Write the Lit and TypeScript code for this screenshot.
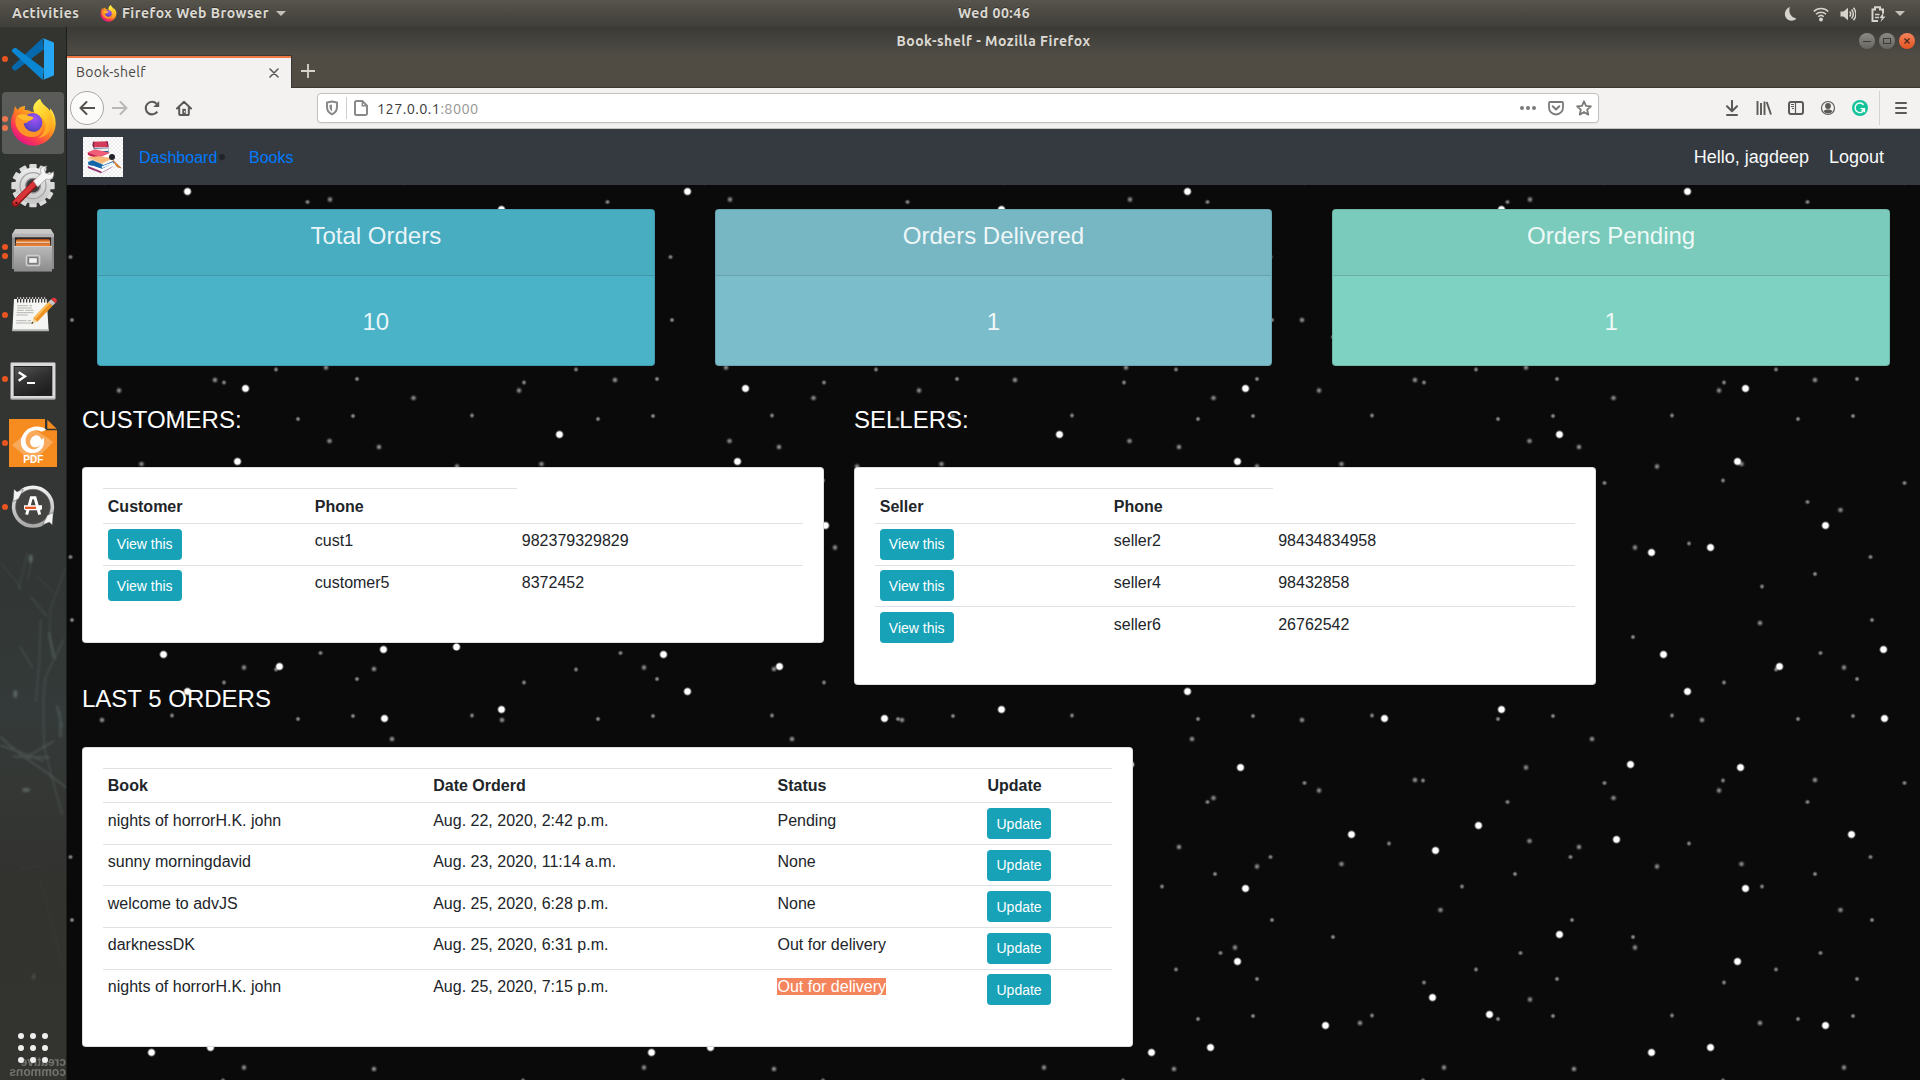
import { LitElement, html, css, unsafeCSS, type TemplateResult } from "lit";
import { customElement } from "lit/decorators.js";
import { classMap } from "lit/directives/class-map.js";

/* ---------- starfield: three layers that repeat at different periods ---------- */
type Pt = [number, number];
const BRIGHT: Pt[] = [[796,283],[1144,319],[1456,268],[868,394],[310,448],[697,613],[1027,622],[1459,475],[241,796],[655,838],[112,871],[1360,823],[1042,985],[484,1123],[1018,1204],[103,1312],[274,1363],[760,1477],[937,1462],[1282,1396],[175,260]];
const MEDIUM: Pt[] = [[912,480],[581,536],[384,622],[646,713],[962,691],[1251,660],[394,843],[543,860],[777,919],[1030,912],[1327,1049],[711,1162],[396,1318],[1085,1388],[528,1527],[1337,1522]];
const SMALL: Pt[] = [[1251,42],[1092,79],[1422,180],[704,231],[1267,279],[1134,328],[1377,357],[978,367],[821,466],[1199,476],[1365,468],[619,668],[974,661],[1228,726],[873,850],[1417,891]];
const ORIGIN: Pt = [67, 185];

function layer(points: Pt[], period: number, gradient: string): string[] {
  return points.map(([px, py]) => {
    const x = 1398 + (px + 0.5) / 3 - ORIGIN[0];
    const y = 560 + (py + 0.5) / 3 - ORIGIN[1];
    const left = Math.round((((x - period / 2) % period) + period) % period * 2) / 2;
    const top = Math.round((((y - period / 2) % period) + period) % period * 2) / 2;
    return `${gradient} ${left}px ${top}px / ${period}px ${period}px`;
  });
}
const starfield = [
  ...layer(BRIGHT, 500, "radial-gradient(circle at center, #fff 0, #fff 3px, rgba(255,255,255,0) 4px)"),
  ...layer(MEDIUM, 400, "radial-gradient(circle at center, rgba(255,255,255,.6) 0, rgba(255,255,255,.46) 1px, rgba(255,255,255,.16) 2.5px, rgba(255,255,255,0) 3.8px)"),
  ...layer(SMALL, 300, "radial-gradient(circle at center, rgba(255,255,255,.62) 0, rgba(255,255,255,.44) 1px, rgba(255,255,255,0) 2.8px)"),
].join(",");

/* ---------- icons ---------- */
const firefox = (id: string, cls: string, box: string) => html`
  <svg class=${cls} viewBox=${box}>
    <defs>
      <linearGradient id="${id}a" x1="0.85" y1="0.1" x2="0.25" y2="0.95">
        <stop offset="0" stop-color="#fff44f"/><stop offset=".3" stop-color="#ffb61f"/><stop offset=".55" stop-color="#ff7a25"/><stop offset=".78" stop-color="#fb3a50"/><stop offset="1" stop-color="#e31587"/>
      </linearGradient>
      <radialGradient id="${id}b" cx=".6" cy=".3" r=".75">
        <stop offset="0" stop-color="#a452f5"/><stop offset=".6" stop-color="#6b48d8"/><stop offset="1" stop-color="#4a3cb0"/>
      </radialGradient>
      <linearGradient id="${id}c" x1="0.2" y1="0" x2="0.8" y2="1">
        <stop offset="0" stop-color="#fff04c"/><stop offset=".5" stop-color="#ffcb2a"/><stop offset="1" stop-color="#ff9a23"/>
      </linearGradient>
    </defs>
    <path d="M120 24c4 12 12 18 22 27 3 3 6 6 8 10l1-9c10 12 16 28 16 45 0 37-30 67-67 67S33 134 33 97c0-12 2-22 7-30l5-22c3 5 5 8 7 12l8-8 15-5-1 13c9-1 14 2 20 5h11c-6-13-1-28 15-38z" fill="url(#${id}a)"/>
    <path d="M120 24c4 12 12 18 22 27 14 14 18 30 14 50-4 22-20 36-42 40 20-12 28-32 20-52-7-13-27-18-33-30-4-12 3-27 19-35z" fill="url(#${id}c)"/>
    <circle cx="98" cy="95" r="29" fill="url(#${id}b)"/>
    <path d="M50 75c10-5 22-5 33 0 6 3 12 2 17 4 0 6-6 9-15 12-3 6-10 7-14 5 1 13 11 24 26 26 14 2 24-6 29-15 2 18-12 31-30 31-26 0-47-19-50-43 0-8 1-14 4-20z" fill="#ff9526"/>
    <path d="M50 75c10-6 22-7 31-2 6 3 13 4 19 6-1 5-7 8-15 10-12 1-20-3-35-14z" fill="#ffbd2e"/>
  </svg>`;

const vscode = html`<svg class="glyph" viewBox="0 0 201 192">
  <path d="M128 33 L132 67 L48 130 Q44 132 40 128 L36 124 Q34 120 38 117 Z" fill="#0769ad"/>
  <path d="M128 159 L132 125 L48 63 Q44 61 40 65 L36 68 Q34 73 38 76 Z" fill="#0a86d2"/>
  <path d="M128 33 L160 46 Q162 47 162 50 V142 Q162 145 160 146 L128 159 Q132 157 132 152 V40 Q132 35 128 33Z" fill="#27a7f3"/>
</svg>`;

const teeth = Array.from({ length: 12 }, (_, i) => i * 30);
const settings = html`<svg class="glyph" viewBox="0 0 201 192">
  <defs><linearGradient id="gr" x1="0" y1="0" x2="0" y2="1"><stop offset="0" stop-color="#ededed"/><stop offset="1" stop-color="#c4c4c4"/></linearGradient></defs>
  ${teeth.map((a) => html`<svg x="0" y="0" width="201" height="192" viewBox="0 0 201 192"><rect x="88" y="27" width="22" height="26" rx="3" fill="#dadada" transform="rotate(${a} 99 92)"/></svg>`)}
  <circle cx="99" cy="92" r="54" fill="url(#gr)"/>
  <circle cx="99" cy="92" r="39" fill="none" stroke="#a5a5a5" stroke-width="4"/>
  <circle cx="99" cy="92" r="22" fill="#3b3b39" stroke="#8e8e8e" stroke-width="4"/>
  <path d="M46 145 L108 82" stroke="#8f1616" stroke-width="21" stroke-linecap="round"/>
  <path d="M47 142 L107 82" stroke="#d8353a" stroke-width="15" stroke-linecap="round"/>
  <path d="M100 78 L124 55 C117 42 126 32 141 34 L133 43 137 55 149 58 160 50 C165 64 154 78 138 72 L113 96Z" fill="#f4f4f4" stroke="#999" stroke-width="2"/>
  <circle cx="49" cy="144" r="3.500" fill="#4a0a0a"/>
</svg>`;

const files = html`<svg class="glyph" viewBox="0 0 201 192">
  <defs><linearGradient id="fl" x1="0" y1="0" x2="0" y2="1"><stop offset="0" stop-color="#b9b9b9"/><stop offset="1" stop-color="#8b8b8b"/></linearGradient></defs>
  <path d="M46 30h106l10 17v103H36V47z" fill="#8c8c8c"/><path d="M46 30h106l10 17H36z" fill="#c9c9c9"/>
  <rect x="36" y="44" width="126" height="11" fill="#b3b3b3"/>
  <rect x="45" y="55" width="108" height="27" fill="#2d2928"/>
  <rect x="50" y="60" width="98" height="5" fill="#b24c12"/><rect x="48" y="64" width="102" height="7" fill="#f08a3c"/><rect x="48" y="70" width="102" height="3" fill="#fff3e4"/><rect x="47" y="73" width="104" height="9" fill="#e77a2c"/>
  <path d="M42 82h114v76H42z" fill="url(#fl)"/><path d="M42 82h114v2H42z" fill="#dedede"/><path d="M42 156h114v3H42z" fill="#666"/>
  <rect x="79" y="109" width="40" height="31" rx="6" fill="none" stroke="#cfcfcf" stroke-width="4"/>
  <rect x="86" y="116" width="26" height="17" fill="#f1f1f1" stroke="#707070" stroke-width="3"/>
</svg>`;

const notes = html`<svg class="glyph" viewBox="0 0 201 192">
  <path d="M42 48h98l6 95H37z" fill="#f5f5f3"/><path d="M37 139h109v6H37z" fill="#b5b5b1"/>
  <path d="M53 57V42M62 57V42M71 57V42M80 57V42M89 57V42M98 57V42M107 57V42M116 57V42M125 57V42M134 57V42" stroke="#3b3b3b" stroke-width="4" stroke-linecap="round"/>
  <path d="M53 48V42M62 48V42M71 48V42M80 48V42M89 48V42M98 48V42M107 48V42M116 48V42M125 48V42M134 48V42" stroke="#cfcfcf" stroke-width="3"/>
  <path d="M52 68h32M88 68h8M52 75h44M51 82h20M76 82h25M50 89h50M49 96h34M49 113h30M83 113h10M48 120h45" stroke="#a8a8a4" stroke-width="2.5"/>
  <path d="M94 123l6-18 12 11z" fill="#f3d9a0"/><path d="M94 123l2-7 5 4z" fill="#222"/>
  <path d="M100 105 L145 57 L158 68 L112 116Z" fill="#ef9422"/><path d="M103 102 L147 56 L151 60 L106 108Z" fill="#ffc15e"/>
  <path d="M145 57l8-8 13 11-8 8z" fill="#c9c9c9"/><path d="M153 49c5-6 11-6 15-2s4 8-2 13z" fill="#e2383c"/>
</svg>`;

const terminal = html`<svg class="glyph" viewBox="0 0 201 192">
  <defs><linearGradient id="tm" x1="0" y1="0" x2=".6" y2="1"><stop offset="0" stop-color="#555"/><stop offset=".5" stop-color="#333"/><stop offset="1" stop-color="#1f1f1f"/></linearGradient></defs>
  <rect x="31" y="46" width="136" height="112" rx="4" fill="#a9a9a9"/><rect x="33" y="48" width="132" height="106" rx="3" fill="#dadada"/>
  <rect x="41" y="57" width="116" height="90" fill="#222"/><rect x="44" y="60" width="110" height="84" fill="url(#tm)"/>
  <path d="M56 76L75 88L56 101" fill="none" stroke="#fff" stroke-width="7"/><rect x="81" y="105" width="24" height="6" fill="#fff"/>
</svg>`;

const pdf = html`<svg class="glyph" viewBox="0 0 201 192">
  <path d="M27 24h108v34h36v110H27z" fill="#f68b1f"/><path d="M142 26l28 27h-28z" fill="#f68b1f"/>
  <path d="M98 50l62 43-62 62-62-53z" fill="#f9a95a"/>
  <path d="M139 56C122 41 92 44 77 60C52 86 60 124 95 126C122 127 137 106 131 80L125 86C118 69 104 70 95 80C86 92 91 107 104 109C112 110 118 106 121 100C116 117 96 120 84 108C71 94 76 70 94 61C106 55 118 58 125 62Z" fill="#fff"/>
  <text x="100" y="156" text-anchor="middle" class="pdf-label">PDF</text>
</svg>`;

const updater = html`<svg class="glyph" viewBox="0 0 201 192">
  <defs><linearGradient id="ug" x1="0" y1="0" x2="0" y2="1"><stop offset="0" stop-color="#f0f0f0"/><stop offset="1" stop-color="#a9a9a9"/></linearGradient></defs>
  <circle cx="99" cy="95" r="58" fill="#444442" stroke="url(#ug)" stroke-width="11"/><circle cx="99" cy="95" r="52" fill="none" stroke="#6d6d6b" stroke-width="1.5"/>
  <path d="M39 80l3-38 9 8 19-7-14 28z" fill="#f2f2f2" stroke="#444" stroke-width="1.5"/><path d="M160 112l-3 38-9-8-20 7 14-28z" fill="#f2f2f2" stroke="#444" stroke-width="1.5"/>
  <path d="M80 119L94 68h11l14 51" fill="none" stroke="#fff" stroke-width="9"/>
  <path d="M72 91h54v11l-4 4H76l-4-4z" fill="#fff"/><path d="M75 95h33v7H75z" fill="#e95420"/>
</svg>`;

const wallpaper = html`<svg class="wallpaper" viewBox="0 0 201 1620" preserveAspectRatio="none">
  <g fill="none" stroke="#9fc0bb" stroke-linecap="round">
    <path d="M0 68L50 125L62 150M58 145L82 35M84 120L96 45M110 108L160 156M196 85L152 205L147 290L168 360" stroke-width="3" opacity=".16"/>
    <path d="M190 300L136 412L130 480L132 620L158 722L186 822" stroke-width="4" opacity=".18"/>
    <path d="M122 240L118 360L108 484M92 170L140 228M60 320L98 384" stroke-width="4" opacity=".17"/>
    <path d="M0 590L60 642L130 690L200 744M0 616L60 636L130 664M40 650L148 652M90 645L160 604" stroke-width="5" opacity=".2"/>
    <path d="M148 280L160 350M172 500L186 560M180 520L182 590" stroke-width="8" opacity=".16"/>
    <path d="M60 985L126 978M120 1020L190 1280" stroke-width="3" opacity=".07"/>
  </g>
  <g fill="#b5d0cb" opacity=".3"><ellipse cx="92" cy="56" rx="6" ry="12"/><ellipse cx="46" cy="462" rx="6" ry="12"/><ellipse cx="78" cy="750" rx="12" ry="6"/><ellipse cx="101" cy="1310" rx="5" ry="9" opacity=".6"/></g>
</svg>`;

interface DockApp { glyph: TemplateResult; windows: number; active?: boolean; }
const DOCK: DockApp[] = [
  { glyph: vscode, windows: 1 },
  { glyph: firefox("fd", "glyph", "0 0 201 192"), windows: 2, active: true },
  { glyph: settings, windows: 0 },
  { glyph: files, windows: 2 },
  { glyph: notes, windows: 1 },
  { glyph: terminal, windows: 1 },
  { glyph: pdf, windows: 1 },
  { glyph: updater, windows: 1 },
];

const I = {
  back: html`<svg class="i16" viewBox="0 0 16 16"><path d="M15.5 8H1.5M7.5 2L1.5 8l6 6" fill="none" stroke="#55534f" stroke-width="2" stroke-linecap="round" stroke-linejoin="round"/></svg>`,
  forward: html`<svg class="i16" viewBox="0 0 16 16"><path d="M.5 8h14M8.500 2l6 6-6 6" fill="none" stroke="#b9b8b6" stroke-width="2" stroke-linecap="round" stroke-linejoin="round"/></svg>`,
  reload: html`<svg class="i16" viewBox="0 0 16 16"><path d="M13.300 11.600A6.300 6.300 0 1 1 12.600 3.700" fill="none" stroke="#5c5a57" stroke-width="2.100"/><path d="M15.200 1v6H9.200z" fill="#5c5a57"/></svg>`,
  home: html`<svg class="i16" viewBox="0 0 16 16"><path d="M1 8.500L8 1.700l7 6.800M3.200 7.500v6.600a.9.900 0 0 0 .9.900h7.800a.9.900 0 0 0 .9-.9V7.500" fill="none" stroke="#5c5a57" stroke-width="2" stroke-linecap="round" stroke-linejoin="round"/><path d="M6.300 15V8.800h3.500V15" fill="#5c5a57"/><rect x="8" y="11" width="1" height="1.500" fill="#f3f2f1"/></svg>`,
  shield: html`<svg class="i16" viewBox="0 0 16 16"><path d="M8 1.500l5 1v4.300c0 3.700-2 6.300-5 7.500-3-1.200-5-3.800-5-7.500V2.500z" fill="none" stroke="#8a8987" stroke-width="2" stroke-linejoin="round"/><path d="M8 4.500v7C6.300 10.300 5.500 8.700 5.500 6.500V5z" fill="#8a8987"/></svg>`,
  page: html`<svg class="i16" viewBox="0 0 16 16"><path d="M3.500 1h5.800l4.700 4.700v7.800A1.500 1.500 0 0 1 12.500 15h-9A1.500 1.500 0 0 1 2 13.500v-11A1.500 1.500 0 0 1 3.500 1z" fill="none" stroke="#8a8987" stroke-width="2"/><path d="M9.300 1v4.700H14" fill="none" stroke="#8a8987" stroke-width="1.400"/></svg>`,
  more: html`<svg class="i16" viewBox="0 0 16 16"><circle cx="2" cy="8" r="2" fill="#7b7a78"/><circle cx="8" cy="8" r="2" fill="#7b7a78"/><circle cx="14" cy="8" r="2" fill="#7b7a78"/></svg>`,
  pocket: html`<svg class="i16" viewBox="0 0 16 16"><path d="M2 2h12a1 1 0 0 1 1 1v4.500a7 7 0 0 1-14 0V3a1 1 0 0 1 1-1z" fill="none" stroke="#7b7a78" stroke-width="1.800"/><path d="M4.700 6.300L8 9.500l3.300-3.200" fill="none" stroke="#7b7a78" stroke-width="2" stroke-linecap="round" stroke-linejoin="round"/></svg>`,
  star: html`<svg class="i16" viewBox="0 0 16 16"><path d="M8 1.300l2 4.500 4.900.5-3.700 3.300 1.100 5L8 12.100l-4.300 2.500 1.100-5L1.100 6.300 6 5.800z" fill="none" stroke="#7b7a78" stroke-width="1.800" stroke-linejoin="round"/></svg>`,
  download: html`<svg class="i16" viewBox="0 0 16 16"><path d="M8 .8v9.700M3 6.200l5 5 5-5" fill="none" stroke="#5c5a57" stroke-width="2" stroke-linecap="round" stroke-linejoin="round"/><path d="M3 15h10" stroke="#5c5a57" stroke-width="2" stroke-linecap="round"/></svg>`,
  library: html`<svg class="i16" viewBox="0 0 16 16"><path d="M1.500 1v14M5 3v12M8.500 1.500V15M10.700 2l4.300 12.500" fill="none" stroke="#5c5a57" stroke-width="1.900"/></svg>`,
  sidebar: html`<svg class="i16" viewBox="0 0 16 16"><rect x="1" y="2" width="14" height="12" rx="2" fill="none" stroke="#5c5a57" stroke-width="2"/><path d="M7.500 2v12" stroke="#5c5a57" stroke-width="1.200"/><path d="M3 4.500h3M3 6.500h3M4 8.500h2" stroke="#5c5a57"/></svg>`,
  account: html`<svg class="i16" viewBox="0 0 16 16"><circle cx="8" cy="8" r="6.500" fill="none" stroke="#5c5a57" stroke-width="1.200"/><circle cx="8" cy="6" r="2.900" fill="#5c5a57"/><path d="M3.700 11.700C4.300 9.900 5.500 9.500 8 9.500s3.700.4 4.300 2.200A5.600 5.600 0 0 1 8 13.500a5.600 5.600 0 0 1-4.300-1.800z" fill="#5c5a57"/></svg>`,
  grammarly: html`<svg class="i16" viewBox="0 0 16 16"><circle cx="8" cy="8" r="8" fill="#15c39a"/><path d="M11.600 4.700A4.800 4.800 0 1 0 12.200 10" fill="none" stroke="#fff" stroke-width="1.400"/><path d="M8.500 8.600h4v3.700M12.300 8.700l-2.500 2.200" fill="none" stroke="#fff" stroke-width="1.300"/></svg>`,
  menu: html`<svg class="i16" viewBox="0 0 16 16"><path d="M3 3h10M3 8h10M3 13h10" stroke="#5c5a57" stroke-width="2" stroke-linecap="round"/></svg>`,
  moon: html`<svg class="i16" viewBox="0 0 16 16"><path d="M7 .9C5.300 5 6.800 10.900 13.500 12.500C10.500 15.800 5.400 15.400 3 11.800C.5 7.800 2.500 2.500 7 .9z" fill="#d6d3cc"/></svg>`,
  wifi: html`<svg class="i16" viewBox="0 0 16 16"><path d="M.8 5.600C4.700 1.600 11.300 1.600 15.200 5.600M3 8.300c2.800-2.800 7.200-2.800 10 0M5.200 10.700c1.600-1.500 4-1.500 5.600 0" fill="none" stroke="#d6d3cc" stroke-width="1.500"/><circle cx="8" cy="13.400" r="2" fill="#d6d3cc"/></svg>`,
  volume: html`<svg class="i16" viewBox="0 0 16 16"><path d="M.5 5.500h3L8 1.800v12.400L3.500 10.500h-3z" fill="#d6d3cc"/><path d="M9.700 5.500c1.200 1.500 1.200 3.500 0 5M11.600 3.500c2.100 2.700 2.100 6.300 0 9M13.500 1.800c3 3.700 3 8.700 0 12.400" fill="none" stroke="#d6d3cc" stroke-width="1.500"/></svg>`,
  battery: html`<svg class="i16" viewBox="0 0 16 16"><path d="M8 15H2.500V3.500H5V1.200h5v2.300h3v4" fill="none" stroke="#d6d3cc" stroke-width="2"/><path d="M5 8.500h4.500M5 11.500h4" stroke="#d6d3cc" stroke-width="1.500"/><path d="M13.500 6.500L9.500 12h2.300l-1.300 4L15.500 10.500h-2.500z" fill="#d6d3cc"/></svg>`,
  caret: html`<svg class="caret" viewBox="0 0 10 5"><path d="M0 0h10L5 5z" fill="#c4c1ba"/></svg>`,
};

const books = html`<svg class="brand" viewBox="0 0 120 120">
  <defs><pattern id="ck" width="12" height="12" patternUnits="userSpaceOnUse"><rect width="12" height="12" fill="#fff"/><path d="M0 0h6v6H0zM6 6h6v6H6z" fill="#ededed"/></pattern></defs>
  <rect width="120" height="120" fill="url(#ck)"/>
  <path d="M30 14l43-1 3 18H32z" fill="#d33b5a"/><path d="M30 14q-4 9 1 18h4q-4-9 0-18zM70 13l4 18h3q-1-12-3-18z" fill="#8a1f4b"/>
  <path d="M32 33l44-1 1 17H34z" fill="#1d5f93"/><path d="M33 35l43-1v8H34z" fill="#f4f1ea"/>
  <path d="M14 46l22-9 46 11-30 14z" fill="#ef5d78"/><path d="M14 46l38 15v8L15 54z" fill="#c22049"/><path d="M52 61l30-13v7L52 68z" fill="#fff"/>
  <path d="M14 60l34-2 42 6-34 16z" fill="#f7b878"/><path d="M14 60l41 19v7L15 68z" fill="#f3d2b4"/><path d="M56 80l34-14v7L56 87z" fill="#fff5ea"/>
  <path d="M15 75l14-5 33 14 30-13v8L56 96 16 83z" fill="#1667a9"/><path d="M56 88l34-13v6L57 94z" fill="#e9f3fb"/>
  <path d="M17 87l13-1 28 10 32-15v7L58 106 17 96z" fill="#fff"/><path d="M15 88l40 16v4L16 93zM58 106l31-17" fill="#8a2261" stroke="#8a2261" stroke-width="1.500"/>
  <path d="M90 70l24 23-12-4z" fill="#e88b26" stroke="#b5611b" stroke-width="2"/>
</svg>`;

/* ---------- data ---------- */
const STATS = [
  { title: "Total Orders", value: "10", tone: "teal" },
  { title: "Orders Delivered", value: "1", tone: "steel" },
  { title: "Orders Pending", value: "1", tone: "mint" },
];
const CUSTOMERS = [["cust1", "982379329829"], ["customer5", "8372452"]];
const SELLERS = [["seller2", "98434834958"], ["seller4", "98432858"], ["seller6", "26762542"]];
const ORDERS = [
  { book: "nights of horrorH.K. john", date: "Aug. 22, 2020, 2:42 p.m.", status: "Pending" },
  { book: "sunny morningdavid", date: "Aug. 23, 2020, 11:14 a.m.", status: "None" },
  { book: "welcome to advJS", date: "Aug. 25, 2020, 6:28 p.m.", status: "None" },
  { book: "darknessDK", date: "Aug. 25, 2020, 6:31 p.m.", status: "Out for delivery" },
  { book: "nights of horrorH.K. john", date: "Aug. 25, 2020, 7:15 p.m.", status: "Out for delivery", selected: true },
];

@customElement("app-root")
export class AppRoot extends LitElement {
  static styles = css`
    :host { display: block; width: 1920px; height: 1080px; overflow: hidden; background: #0a0a0a; font-family: "Liberation Sans", Arial, sans-serif; font-size: 16px; line-height: 24px; color: #212529; }
    * { box-sizing: border-box; }
    svg { display: block; flex: none; }
    .i16 { width: 16px; height: 16px; }
    .ui { font-family: "Ubuntu", "Open Sans", "Noto Sans", sans-serif; white-space: nowrap; }

    .panel { display: flex; align-items: center; height: 27px; padding: 0 15px 0 12px; background: linear-gradient(#57544c, #3f3e39); color: #dcd9d2; font-size: 14px; font-weight: 700; line-height: 27px; letter-spacing: .5px; text-shadow: 0 -1px 0 rgba(0,0,0,.35); }
    .start { display: flex; align-items: center; width: 946px; }
    .activities { width: 88px; }
    .panel-ff { width: 17px; height: 17px; margin-right: 5px; }
    .app-name { width: 154px; }
    .caret { width: 10px; height: 5px; }
    .tray { display: flex; align-items: center; justify-content: flex-end; flex: 1; gap: 14px; }
    .tray .i16:nth-child(3) { margin-left: -3px; }
    .tray .caret { margin-left: -5px; }

    .body { display: flex; height: 1053px; }
    .dock { position: relative; display: flex; flex-direction: column; width: 67px; overflow: hidden; border-right: 1px solid #1d1f1d;
      background: linear-gradient(#33342f 0, #2f3330 150px, #333533 420px, #323735 560px, #343a39 690px, #343734 760px, #32322f 860px, #33332f 1053px); }
    .wallpaper { position: absolute; left: 0; top: 513px; width: 67px; height: 540px; filter: blur(.8px); }
    .app { display: flex; align-items: center; height: 64px; padding: 1px 2px; }
    .app-tile { display: flex; width: 62px; height: 62px; border-radius: 4px; }
    .app-tile.active { background: rgba(255,255,255,.2); }
    .app-tile .glyph { width: 67px; height: 64px; margin: -1px 0 0 -2px; }
    .pips { display: flex; flex-direction: column; justify-content: center; gap: 3px; width: 6px; height: 62px; margin-right: -6px; }
    .pip { width: 6px; height: 6px; border-radius: 50%; background: #e95420; }
    .pdf-label { font: 700 30px "Liberation Sans", Arial, sans-serif; fill: #fff; }
    .apps-grid { position: relative; z-index: 1; display: grid; grid-template-columns: repeat(3, 6px); gap: 6px; margin: auto 0 0 18px; }
    .apps-grid i { width: 6px; height: 6px; border-radius: 50%; background: #efefef; }
    .watermark { display: flex; flex-direction: column; height: 24px; margin-top: -7px; padding-top: 1px; font: 700 12px/10px "Liberation Sans", Arial, sans-serif; color: rgba(190,190,186,.45); transform: scaleX(-1); }

    .window { display: flex; flex-direction: column; flex: 1; min-width: 0; }
    .titlebar { display: flex; align-items: center; height: 28px; padding-right: 5px; background: linear-gradient(#3b3a36, #4f4c45); color: #dcd9d2; font-size: 14px; font-weight: 700; letter-spacing: .5px; }
    .title { flex: 1; padding-left: 61px; text-align: center; }
    .controls { display: flex; gap: 4px; }
    .ctl { width: 16px; height: 16px; border-radius: 50%; background: linear-gradient(#8c8a84, #666560); }
    .ctl.close { background: linear-gradient(#f4845c, #e35321); }
    .tabs { display: flex; align-items: stretch; height: 33px; background: #504c44; border-bottom: 1px solid #3a3833; }
    .tab { display: flex; align-items: center; justify-content: space-between; width: 225px; height: 33px; padding: 2px 12px 0 9px; border-top: 1px solid #3a3833; border-right: 1px solid #3a3833; background: linear-gradient(#f07746 2px, #f3f2f1 2px); color: #4a4845; font-size: 14px; letter-spacing: .3px; }
    .tab-label { margin-top: -3px; }
    .tab-x { width: 10px; height: 10px; }
    .plus { width: 14px; height: 14px; margin: 9px 0 0 9px; }
    .toolbar { display: flex; align-items: center; height: 41px; padding: 0 11px 0 3px; background: #f3f2f1; border-bottom: 1px solid #c4c3c1; }
    .back { display: flex; align-items: center; justify-content: center; width: 34px; height: 34px; border: 1px solid #a9a8a6; border-radius: 50%; background: #fbfbfa; }
    .nav-icons { display: flex; gap: 16px; width: 213px; padding-left: 8px; }
    .url { display: flex; align-items: center; width: 1282px; height: 30px; padding: 0 6px; border: 1px solid #c2c1bf; border-radius: 4px; background: #fff; box-shadow: 0 1px 2px rgba(0,0,0,.06); }
    .url-sep { width: 1px; height: 22px; margin: 0 6px; background: #cfcecc; }
    .addr { flex: 1; padding: 1px 0 0 8px; font-size: 14.5px; letter-spacing: .4px; color: #3b3a38; }
    .port { color: #969593; }
    .url-actions { display: flex; gap: 12px; }
    .tools { display: flex; align-items: center; gap: 16px; flex: 1; justify-content: flex-end; }
    .tool-sep { width: 1px; height: 34px; margin: 0 -3px 0 -5px; background: #d3d2d0; }

    .navbar { display: flex; align-items: center; height: 56px; padding: 0 36px 0 16px; background: #343a40; }
    .brand { width: 40px; height: 40px; margin-right: -14px; }
    .bullet { width: 6px; height: 6px; border-radius: 50%; background: #212529; }
    .item { display: flex; align-items: center; }
    .link { padding: 2px 0 0 24px; color: #007bff; text-decoration: none; }
    .item.first .link { width: 104px; }
    .hello { margin-left: auto; font-size: 18px; color: #f8f9fa; }
    .logout { margin-left: 20px; font-size: 18px; color: #f8f9fa; }

    .page { flex: 1; padding-top: 24px; background: ${unsafeCSS(starfield)}, #0a0a0a; }
    .stats { display: grid; grid-template-columns: repeat(3, 1fr); }
    .stat { margin: 0 30px; height: 157px; border: 1px solid rgba(0,0,0,.125); border-radius: 4px; color: rgba(255,255,255,.9); font-size: 24px; line-height: 28.8px; text-align: center; overflow: hidden; }
    .stat-head { height: 66px; padding-top: 12px; border-bottom: 1px solid rgba(0,0,0,.125); background: rgba(0,0,0,.03); }
    .stat-value { padding-top: 32px; }
    .teal { background-color: #4bb3c8; }
    .steel { background-color: #7bbdcb; }
    .mint { background-color: #7ed2c2; }

    .people { display: grid; grid-template-columns: 742px 742px; gap: 30px; align-items: start; padding: 39.6px 0 0 15px; }
    .orders { width: 1066px; padding-left: 15px; }
    .heading { margin: 0 0 33px; font-size: 24px; font-weight: 400; line-height: 28.8px; color: #fff; }
    .card { padding: 20px 20px 36px; border: 1px solid rgba(0,0,0,.125); border-radius: 4px; background: #fff; }
    .row { display: grid; }
    .cust .row { grid-template-columns: 207px 207px 286px; }
    .sell .row { grid-template-columns: 234px 164.4px 301.6px; }
    .ord .row { grid-template-columns: 325.4px 344.3px 210px 129.3px; }
    .cell { height: 41.6px; padding: 5.35px 4.8px 0; border-top: 1px solid #dee2e6; white-space: nowrap; }
    .cell.action { padding-top: 4.8px; }
    .head .cell { height: 34.6px; font-weight: 700; }
    .btn { display: inline-block; height: 31px; padding: 4.55px 8px 3.45px; border: 1px solid #17a2b8; border-radius: 3.2px; background: #17a2b8; color: #fff; font: 14px/21px "Liberation Sans", Arial, sans-serif; vertical-align: top; }
    .selected { background: #f4845c; color: #fff; }
  `;

  private dock() {
    return html`<aside class="dock">
      ${wallpaper}
      ${DOCK.map((app) => html`<div class="app">
        <div class="pips">${Array.from({ length: app.windows }, () => html`<i class="pip"></i>`)}</div>
        <div class=${classMap({ "app-tile": true, active: !!app.active })}>${app.glyph}</div>
      </div>`)}
      <div class="apps-grid">${Array.from({ length: 9 }, () => html`<i></i>`)}</div>
      <div class="watermark"><span>creative</span><span>commons</span></div>
    </aside>`;
  }

  private people(title: string, kind: string, label: string, rows: string[][]) {
    return html`<section>
      <h4 class="heading">${title}</h4>
      <div class="card ${kind}">
        <div class="row head"><div class="cell">${label}</div><div class="cell">Phone</div></div>
        ${rows.map(([name, phone]) => html`<div class="row">
          <div class="cell action"><a class="btn">View this</a></div><div class="cell">${name}</div><div class="cell">${phone}</div>
        </div>`)}
      </div>
    </section>`;
  }

  render() {
    return html`
      <header class="panel ui">
        <div class="start"><span class="activities">Activities</span>${firefox("fp", "panel-ff", "31 22 138 144")}<span class="app-name">Firefox Web Browser</span>${I.caret}</div>
        <span class="clock">Wed 00:46</span>
        <div class="tray">${I.moon}${I.wifi}${I.volume}${I.battery}${I.caret}</div>
      </header>
      <div class="body">
        ${this.dock()}
        <main class="window">
          <div class="titlebar ui">
            <span class="title">Book-shelf - Mozilla Firefox</span>
            <div class="controls">
              <svg class="ctl" viewBox="0 0 16 16"><path d="M4 8.500h8" stroke="#3c3b37"/></svg>
              <svg class="ctl" viewBox="0 0 16 16"><rect x="4.500" y="5.500" width="7" height="5" fill="none" stroke="#3c3b37"/></svg>
              <svg class="ctl close" viewBox="0 0 16 16"><path d="M5.500 5.500l5 5M10.500 5.500l-5 5" stroke="#4a2a1c" stroke-width="1.300"/></svg>
            </div>
          </div>
          <div class="tabs ui">
            <div class="tab"><span class="tab-label">Book-shelf</span><svg class="tab-x" viewBox="0 0 10 10"><path d="M1 1l8 8M9 1L1 9" stroke="#5c5a57" stroke-width="1.600" stroke-linecap="round"/></svg></div>
            <svg class="plus" viewBox="0 0 14 14"><path d="M7 0v14M0 7h14" stroke="#d6d3cc" stroke-width="1.800"/></svg>
          </div>
          <div class="toolbar ui">
            <span class="back">${I.back}</span>
            <div class="nav-icons">${I.forward}${I.reload}${I.home}</div>
            <div class="url">
              ${I.shield}<i class="url-sep"></i>${I.page}
              <span class="addr"><span class="host">127.0.0.1</span><span class="port">:8000</span></span>
              <div class="url-actions">${I.more}${I.pocket}${I.star}</div>
            </div>
            <div class="tools">${I.download}${I.library}${I.sidebar}${I.account}${I.grammarly}<i class="tool-sep"></i>${I.menu}</div>
          </div>
          <nav class="navbar">
            ${books}
            <div class="item first"><i class="bullet"></i><a class="link">Dashboard</a></div>
            <div class="item"><i class="bullet"></i><a class="link">Books</a></div>
            <span class="hello">Hello, jagdeep</span><span class="logout">Logout</span>
          </nav>
          <div class="page">
            <div class="stats">
              ${STATS.map((s) => html`<div class="stat ${s.tone}"><div class="stat-head">${s.title}</div><div class="stat-value">${s.value}</div></div>`)}
            </div>
            <div class="people">
              ${this.people("CUSTOMERS:", "cust", "Customer", CUSTOMERS)}
              ${this.people("SELLERS:", "sell", "Seller", SELLERS)}
            </div>
            <section class="orders">
              <h4 class="heading">LAST 5 ORDERS</h4>
              <div class="card ord">
                <div class="row head">${["Book", "Date Orderd", "Status", "Update"].map((t) => html`<div class="cell">${t}</div>`)}</div>
                ${ORDERS.map((o) => html`<div class="row">
                  <div class="cell">${o.book}</div><div class="cell">${o.date}</div>
                  <div class="cell"><span class=${classMap({ selected: !!o.selected })}>${o.status}</span></div>
                  <div class="cell action"><a class="btn">Update</a></div>
                </div>`)}
              </div>
            </section>
          </div>
        </main>
      </div>`;
  }
}
